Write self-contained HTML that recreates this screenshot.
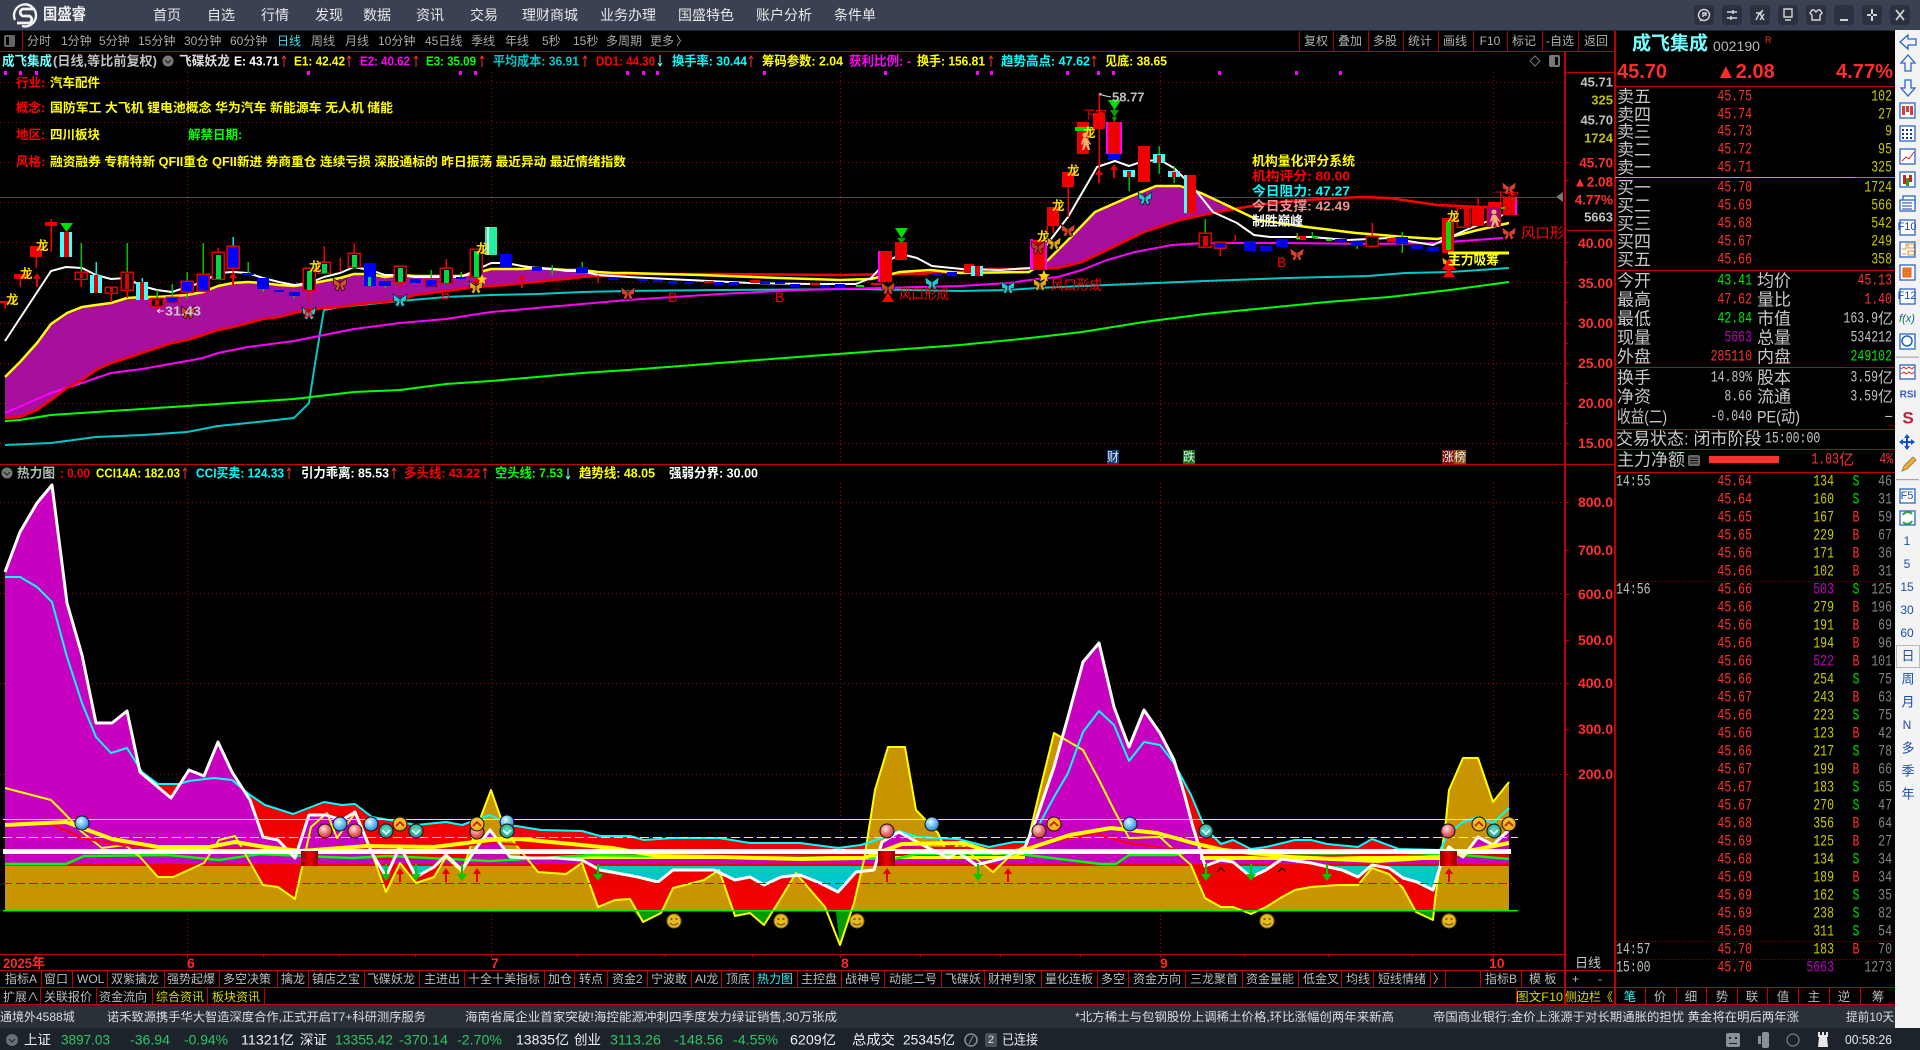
<!DOCTYPE html>
<html lang="zh-CN"><head><meta charset="utf-8"><title>国盛睿</title>
<style>
html,body{margin:0;padding:0;background:#000;width:1920px;height:1050px;overflow:hidden}
svg{display:block}
text{font-family:"Liberation Sans","Noto Sans CJK SC",sans-serif;dominant-baseline:central;white-space:pre}
.b text,text.b{font-weight:700}
.m text,text.m{font-family:"Liberation Mono","Noto Sans CJK SC",monospace;font-size:16px;transform-box:fill-box;transform-origin:0 50%;transform:scaleX(.72)}
.m.e text{transform-origin:100% 50%}
.m.c text{transform-origin:50% 50%}
.e text{text-anchor:end}
.c text{text-anchor:middle}
.l polyline{fill:none}
.cr{shape-rendering:crispEdges}
</style></head><body>
<svg xmlns="http://www.w3.org/2000/svg" width="1920" height="1050" viewBox="0 0 1920 1050">
<defs>
<radialGradient id="gb" cx=".4" cy=".35" r=".7"><stop offset="0" stop-color="#e8f8ff"/><stop offset=".55" stop-color="#62bcf6"/><stop offset="1" stop-color="#2a78d0"/></radialGradient>
<radialGradient id="gr" cx=".4" cy=".35" r=".7"><stop offset="0" stop-color="#ffe4e4"/><stop offset=".55" stop-color="#ec6a6a"/><stop offset="1" stop-color="#c03030"/></radialGradient>
<radialGradient id="gt" cx=".5" cy=".4" r=".7"><stop offset="0" stop-color="#66e0c0"/><stop offset="1" stop-color="#108078"/></radialGradient>
<radialGradient id="go" cx=".5" cy=".4" r=".7"><stop offset="0" stop-color="#ffd848"/><stop offset="1" stop-color="#f09400"/></radialGradient>
<linearGradient id="rb" x1="0" x2="1" y1="0" y2="0"><stop offset="0" stop-color="#8c0000"/><stop offset=".5" stop-color="#f00000"/><stop offset="1" stop-color="#8c0000"/></linearGradient>
<g id="bf"><path d="M0-1-7-6-6 1-3 2-5 5-2 7 0 2 2 7 5 5 3 2 6 1 7-6Z" stroke="#000" stroke-width=".6"/><path d="M0-5V4" stroke="#222" stroke-width="1"/></g>
<g id="up"><path d="M-4 1 0-5 4 1H1V9H-1V1Z" fill="#e80000"/></g>
<g id="dn"><path d="M-1-9H1V1H5L0 8-5 1H-1Z" fill="#00c800"/></g>
<g id="sm"><circle r="7" fill="#e8b820" stroke="#8a6a00"/><circle cx="-2.5" cy="-2" r="1" fill="#553"/><circle cx="2.5" cy="-2" r="1" fill="#553"/><path d="M-4 2Q0 6 4 2" fill="none" stroke="#553"/></g>
<g id="ch"><path d="M-4 2 0-2 4 2" fill="none" stroke-width="2"/></g>
<clipPath id="ca"><rect x="0" y="470" width="1564" height="396"/></clipPath>
<clipPath id="cb"><rect x="0" y="866" width="1564" height="100"/></clipPath>
<clipPath id="cc"><rect x="0" y="470" width="1564" height="440"/></clipPath>
<clipPath id="cd"><rect x="0" y="910" width="1564" height="50"/></clipPath>
</defs>
<rect width="1920" height="1050" fill="#000"/>

<!-- top bar -->
<rect width="1920" height="30" fill="#3a4152"/>
<rect y="30" width="1920" height="1" fill="#20242c"/>
<g fill="none" stroke="#f2f2f2">
<path d="M15 20A11 11 0 1 1 22 26" stroke-width="2.4"/>
<path d="M34 9H23a3.6 3.6 0 0 0 0 7h6a3.6 3.6 0 0 1 0 7H17" stroke-width="2.8"/>
</g>
<text x="43" y="15" font-size="16" font-weight="700" fill="#eee" textLength="43" lengthAdjust="spacingAndGlyphs">国盛睿</text>
<g font-size="14" fill="#e8e8e8">
<text x="153" y="15">首页</text><text x="207" y="15">自选</text><text x="261" y="15">行情</text><text x="315" y="15">发现</text><text x="363" y="15">数据</text><text x="416" y="15">资讯</text><text x="470" y="15">交易</text><text x="522" y="15">理财商城</text><text x="600" y="15">业务办理</text><text x="678" y="15">国盛特色</text><text x="756" y="15">账户分析</text><text x="834" y="15">条件单</text>
</g>
<g fill="#2b3140"><rect x="1694" y="5" width="20" height="20" rx="4"/><rect x="1722" y="5" width="20" height="20" rx="4"/><rect x="1750" y="5" width="20" height="20" rx="4"/><rect x="1778" y="5" width="20" height="20" rx="4"/><rect x="1806" y="5" width="20" height="20" rx="4"/><rect x="1834" y="5" width="20" height="20" rx="4"/><rect x="1862" y="5" width="20" height="20" rx="4"/><rect x="1890" y="5" width="20" height="20" rx="4"/></g>
<g fill="none" stroke="#d4d4d4" stroke-width="1.4">
<circle cx="1704" cy="15" r="5.5"/><path d="M1702 19l-2 2M1702 13h4v2h-3v2"/>
<path d="M1727 12h10M1727 18h10M1733 10v4M1731 16v4"/>
<path d="M1756 20l3-6 4-4M1756 13h6M1760 14l4 6M1764 14l-4 6"/>
<path d="M1784 9h8v8h-8zM1785 20h6"/>
<path d="M1812 10l-2 3 2 2v5h8v-5l2-2-2-3h-2l-2 2-2-2z"/>
<path d="M1840 20h8" stroke-width="2"/>
<path d="M1872 9v5M1872 16v5M1867 15h4M1873 15h4" stroke-width="2"/>
<path d="M1896 10l8 10M1904 10l-8 10" stroke-width="1.8"/>
</g>

<!-- toolbar -->
<rect x="4" y="35" width="11" height="12" rx="2" fill="#666"/><rect x="6" y="37" width="3" height="8" fill="#000"/>
<g font-size="12" fill="#a9a9a9">
<text x="27" y="41">分时</text><text x="61" y="41">1分钟</text><text x="99" y="41">5分钟</text><text x="138" y="41">15分钟</text><text x="184" y="41">30分钟</text><text x="230" y="41">60分钟</text><text x="277" y="41" fill="#3fe0f0">日线</text><text x="311" y="41">周线</text><text x="345" y="41">月线</text><text x="378" y="41">10分钟</text><text x="425" y="41">45日线</text><text x="471" y="41">季线</text><text x="505" y="41">年线</text><text x="542" y="41">5秒</text><text x="573" y="41">15秒</text><text x="606" y="41">多周期</text><text x="650" y="41">更多</text><text x="676" y="41">〉</text>
</g>
<g font-size="12" fill="#b0b0b0" class="c">
<text x="1316" y="41">复权</text><text x="1350" y="41">叠加</text><text x="1385" y="41">多股</text><text x="1420" y="41">统计</text><text x="1455" y="41">画线</text><text x="1490" y="41">F10</text><text x="1524" y="41">标记</text><text x="1560" y="41">-自选</text><text x="1596" y="41">返回</text>
</g>
<path class="cr" stroke="#b00000" fill="none" d="M22.5 31V51M1299.5 31V51M1333.5 31V51M1368.5 31V51M1403.5 31V51M1438.5 31V51M1473.5 31V51M1507.5 31V51M1542.5 31V51M1578.5 31V51"/>

<!-- info header -->
<g class="b" font-size="13">
<text x="2" y="61" fill="#7ff" textLength="50" lengthAdjust="spacingAndGlyphs">成飞集成</text>
<text x="53" y="61" fill="#c0c0c0" textLength="104" lengthAdjust="spacingAndGlyphs">(日线,等比前复权)</text>
<text x="179" y="61" fill="#ddd" textLength="51" lengthAdjust="spacingAndGlyphs">飞碟妖龙</text>
<text x="234" y="61" fill="#fff" textLength="45" lengthAdjust="spacingAndGlyphs">E: 43.71</text>
<text x="294" y="61" fill="#ff0" textLength="51" lengthAdjust="spacingAndGlyphs">E1: 42.42</text>
<text x="360" y="61" fill="#f0f" textLength="50" lengthAdjust="spacingAndGlyphs">E2: 40.62</text>
<text x="426" y="61" fill="#0f0" textLength="50" lengthAdjust="spacingAndGlyphs">E3: 35.09</text>
<text x="493" y="61" fill="#00c8c8" textLength="86" lengthAdjust="spacingAndGlyphs">平均成本: 36.91</text>
<text x="596" y="61" fill="#f00" textLength="59" lengthAdjust="spacingAndGlyphs">DD1: 44.30</text>
<text x="672" y="61" fill="#0ff" textLength="75" lengthAdjust="spacingAndGlyphs">换手率: 30.44</text>
<text x="762" y="61" fill="#ff0" textLength="81" lengthAdjust="spacingAndGlyphs">筹码参数: 2.04</text>
<text x="849" y="61" fill="#f0f" textLength="62" lengthAdjust="spacingAndGlyphs">获利比例: -</text>
<text x="917" y="61" fill="#ff0" textLength="68" lengthAdjust="spacingAndGlyphs">换手: 156.81</text>
<text x="1001" y="61" fill="#0ff" textLength="89" lengthAdjust="spacingAndGlyphs">趋势高点: 47.62</text>
<text x="1105" y="61" fill="#ff0" textLength="62" lengthAdjust="spacingAndGlyphs">见底: 38.65</text>
</g>
<circle cx="168" cy="61" r="5.5" fill="#777"/><path d="M165 60l3 3 3-3" stroke="#222" fill="none"/>
<path stroke="#f03030" fill="none" d="M284 67V56m-2 3 2-3 2 3M349 67V56m-2 3 2-3 2 3M416 67V56m-2 3 2-3 2 3M482 67V56m-2 3 2-3 2 3M585 67V56m-2 3 2-3 2 3M751 67V56m-2 3 2-3 2 3M991 67V56m-2 3 2-3 2 3M1094 67V56m-2 3 2-3 2 3"/>
<path stroke="#7ff" fill="none" d="M660 55V66m-2-3 2 3 2-3"/>
<path stroke="#777" fill="none" d="M1535 56l5 5-5 5-5-5z"/><rect x="1549" y="55" width="11" height="12" rx="2" fill="#777"/><rect x="1555" y="57" width="3" height="8" fill="#000"/>
<path class="cr" fill="#f0f" d="M4 71h3v4H4zM19 71h3v4h-3zM35 71h3v4h-3zM307 71h3v4h-3zM459 71h3v4h-3zM474 71h3v4h-3zM626 71h3v4h-3zM642 71h3v4h-3zM656 71h3v4h-3zM763 71h3v4h-3zM884 71h3v4h-3zM976 71h3v4h-3zM990 71h3v4h-3zM1066 71h3v4h-3zM1097 71h3v4h-3zM1112 71h3v4h-3zM1218 71h3v4h-3zM1295 71h3v4h-3zM1339 71h3v4h-3z"/>

<!-- grid -->
<path class="cr" stroke="#a80000" stroke-dasharray="1 3" fill="none" d="M0 82.5H1564M0 122.5H1564M0 162.5H1564M0 202.5H1564M0 242.5H1564M0 282.5H1564M0 323.5H1564M0 363.5H1564M0 403.5H1564M0 443.5H1564M0 502.5H1564M0 593.5H1564M0 683.5H1564M0 774.5H1564M187.5 72V464M491.5 72V464M840.5 72V464M1160.5 72V464M1493.5 72V464M187.5 483V954M491.5 483V954M840.5 483V954M1160.5 483V954M1493.5 483V954"/>
<path class="cr" stroke="#505050" d="M0 197.5H1556"/><path fill="#777" d="M1556 197l7-5v10z"/>

<!-- top-left fundamentals -->
<g class="b" font-size="12.5">
<text x="16" y="83" fill="#f00">行业:</text><text x="50" y="83" fill="#ff0">汽车配件</text>
<text x="16" y="108" fill="#f00">概念:</text><text x="50" y="108" fill="#ff0" textLength="343" lengthAdjust="spacingAndGlyphs">国防军工 大飞机 锂电池概念 华为汽车 新能源车 无人机 储能</text>
<text x="16" y="135" fill="#f00">地区:</text><text x="50" y="135" fill="#ff0">四川板块</text>
<text x="188" y="135" fill="#0f0">解禁日期:</text>
<text x="16" y="162" fill="#f00">风格:</text><text x="50" y="162" fill="#ff0" textLength="576" lengthAdjust="spacingAndGlyphs">融资融券 专精特新 QFII重仓 QFII新进 券商重仓 连续亏损 深股通标的 昨日振荡 最近异动 最近情绪指数</text>
</g>

<!-- main chart bands -->
<polygon fill="#a6109c" points="5,377 20,362 37,343 51,324 67,313 82,307 96,305 111,303 127,298 142,297 157,297 172,296 187,295 203,292 218,286 233,283 248,282 263,283 279,285 294,286 309,284 324,281 340,278 354,274 370,274 385,277 400,275 415,276 431,276 446,276 461,276 476,273 491,269 506,269 522,269 537,268 552,269 567,270 582,270 598,272 613,273 628,273 628,274 613,276 598,276 582,277 567,279 552,280 537,282 522,283 506,285 491,286 476,287 461,289 446,291 431,293 415,295 400,300 385,302 370,303 354,305 340,307 324,308 309,310 294,313 279,317 263,319 248,323 233,327 218,330 203,335 187,340 172,343 157,348 142,353 127,358 111,363 96,370 82,380 67,388 51,400 37,410 20,417 5,418"/>
<polygon fill="#a6109c" points="1037,270 1048,260 1070,238 1095,212 1129,197 1156,186 1180,186 1201,193 1220,204 1236,208 1217,212 1180,220 1144,232 1107,250 1082,262 1058,268 1037,270"/>
<g class="l" stroke-width="2" stroke-linejoin="round">
<polyline stroke="#00c8c8" points="5,445 51,443 96,437 143,435 187,432 218,426 248,423 294,418 309,403 314,370 320,333 324,310 340,307 370,304 400,301 446,297 491,295 537,294 582,292 628,291 720,290 860,289 960,291 1009,290 1037,288 1107,285 1205,281 1287,278 1368,276 1405,273 1450,272 1509,268"/>
<polyline stroke="#00ff00" points="5,421 20,420 51,415 96,412 142,409 187,406 248,402 294,399 354,392 400,390 446,384 491,381 537,377 582,373 628,370 784,358 960,345 1021,339 1082,332 1144,322 1205,314 1266,308 1327,302 1389,297 1450,290 1509,282"/>
<polyline stroke="#ff00ff" points="5,413 51,393 82,383 111,373 142,369 187,361 203,358 218,353 248,347 294,341 324,335 354,329 400,323 446,319 491,312 537,308 582,304 628,300 720,294 800,290 960,286 1009,283 1037,279 1058,277 1082,270 1107,260 1135,252 1172,245 1205,243 1287,243 1368,244 1437,243 1462,241 1503,238"/>
<polyline stroke="#ff0000" stroke-width="2.500" points="5,418 20,417 37,410 51,400 67,388 82,380 96,370 111,363 127,358 142,353 157,348 172,343 187,340 203,335 218,330 233,327 248,323 263,319 279,317 294,313 309,310 324,308 340,307 354,305 370,303 385,302 400,300 415,295 431,293 446,291 461,289 476,287 491,286 506,285 522,283 537,282 552,280 567,279 582,277 598,276 613,276 628,274 720,274 840,275 900,274 960,272 989,269 1029,269 1058,268 1082,262 1107,250 1144,232 1180,220 1217,212 1246,207 1287,201 1360,197 1389,198 1437,205 1503,208"/>
<polyline stroke="#ffff00" stroke-width="2.500" points="5,377 20,362 37,343 51,324 67,313 82,307 96,305 111,303 127,298 142,297 157,297 172,296 187,295 203,292 218,286 233,283 248,282 263,283 279,285 294,286 309,284 324,281 340,278 354,274 370,274 385,277 400,275 415,276 431,276 446,276 461,276 476,273 491,269 506,269 522,269 537,268 552,269 567,270 582,270 598,272 613,273 628,273 700,275 780,278 840,280 871,279 900,272 930,270 960,273 1029,272 1048,260 1070,238 1095,212 1129,197 1156,186 1180,186 1201,193 1237,210 1258,220 1307,227 1356,233 1405,237 1437,239 1454,236 1478,230 1509,223"/>
<polyline stroke="#ffffff" points="5,341 51,271 66,267 82,268 96,275 111,279 126,278 142,286 157,290 172,292 187,287 203,282 218,273 233,272 248,273 263,278 279,282 294,285 309,283 324,277 340,273 354,267 370,270 385,275 400,275 415,277 431,277 446,277 461,277 476,270 491,263 506,263 522,266 537,268 552,269 567,271 582,271 598,275 613,276 628,277 689,280 750,283 810,284 856,284 871,278 886,262 901,254 917,258 932,266 962,269 1000,270 1030,268 1048,243 1068,217 1082,193 1097,167 1115,161 1129,166 1144,161 1160,160 1174,168 1193,187 1213,212 1237,223 1254,235 1270,237 1311,237 1348,240 1389,238 1433,245 1450,237 1466,230 1503,215"/>
</g>

<!-- wicks -->
<path class="cr" fill="none" stroke="#f00000" stroke-width="1.5" d="M5 303V309M20 279V287M36 257V268M51 219V252M81 279V287M111 293V302M127 290V298M157 306V312M218 248V252M233 268V273M309 290V302M324 246V262M340 258V272M354 243V253M400 282V287M446 259V268M476 277V281M598 275V283M1047 226V233M1053 226V233M1068 187V217M1099 93V177M1114 100V122M1220 248V256M1235 235V241M1372 223V236M1478 197V207M1053 207V233"/>
<path class="cr" fill="none" stroke="#00c000" stroke-width="1.5" d="M81 243V272M127 243V272M157 290V298M172 284V297M187 272V281M187 292V299M203 243V274M248 262V273M263 289V292M294 296V298M370 276V286M385 286V288M431 270V279M461 272V277M552 265V275M582 262V267M1129 177V191M1159 146V154M1159 163V174M1174 166V171M1174 177V183M1205 219V233M1205 247V248M1297 233V236M1312 232V236M1357 246V249M1402 232V237M1402 244V253"/>
<path class="cr" fill="none" stroke="#00f0e0" stroke-width="1.5" d="M233 237V246M96 262V275M142 278V282"/>
<!-- red solid bodies -->
<path class="cr" fill="#ee0000" d="M0 301h10v2H0zM14 274h12v5H14zM30 246h12v11H30zM45 222h12v4H45zM880 251h12v31h-12zM895 242h12v18h-12zM1033 240h14v30h-14zM1047 207h12v19h-12zM1062 172h12v15h-12zM1077 122h12v32h-12zM1093 113h12v16h-12zM1108 122h12v32h-12zM1138 146h12v36h-12zM1184 175h12v38h-12zM1472 207h12v19h-12zM1503 197h12v18h-12zM1442 218h12v35h-12zM1488 202h14v4h-14zM704 281h10v2h-10zM750 280h10v3h-10zM810 283h10v2h-10zM871 283h10v2h-10zM917 272h10v3h-10zM964 264h10v9h-10zM1297 236h9v4h-9zM1387 238h9v4h-9z"/>
<path class="cr" fill="#f0f" d="M1030 239h3v31h-3zM1045 240h2v30h-2zM1120 122h2v32h-2zM1106 122h2v32h-2zM1515 197h2v18h-2zM878 251h2v31h-2z"/>
<path class="cr" fill="#00f" d="M1108 154h12v6h-12z"/>
<!-- green patches -->
<path class="cr" fill="#00e000" d="M1075 127h16v4h-16zM1446 222h5v28h-5zM1490 207h15v2h-15zM1296 237h4v2h-4zM1312 236h6v2h-6zM1326 239h6v2h-6zM856 285h8v2h-8zM1370 238h5v7h-5z"/>
<path class="cr" fill="#00e000" d="M1458 210h5v16h-5z"/>
<!-- hollow red w/ green centers -->
<g class="cr" fill="#000" stroke="#e00000" stroke-width="1.5">
<rect x="212" y="252" width="12" height="27"/><rect x="303" y="268" width="12" height="22"/><rect x="318" y="262" width="12" height="11"/><rect x="348" y="253" width="12" height="14"/><rect x="394" y="266" width="12" height="16"/><rect x="440" y="268" width="12" height="15"/><rect x="470" y="249" width="12" height="28"/>
<rect x="75" y="272" width="12" height="7"/><rect x="105" y="287" width="12" height="6"/><rect x="121" y="272" width="12" height="18"/><rect x="151" y="298" width="12" height="8"/>
<rect x="166" y="297" width="12" height="6" fill="#00f"/><rect x="181" y="281" width="12" height="11" fill="#00f"/><rect x="197" y="274" width="12" height="17" fill="#00f"/><rect x="227" y="246" width="12" height="22" fill="#00f"/><rect x="425" y="279" width="12" height="8" fill="#00f"/><rect x="1214" y="242" width="12" height="6" fill="#00f"/>
<rect x="1366" y="236" width="12" height="10"/><rect x="1199" y="233" width="12" height="14"/>
<rect x="1457" y="208" width="13" height="19" fill="#000"/><rect x="1487" y="206" width="13" height="20" fill="#a0007a"/>
</g>
<path class="cr" fill="#00d840" d="M216 255h5v24h-5zM307 271h5v19h-5zM322 264h5v9h-5zM352 255h5v12h-5zM398 268h5v14h-5zM444 270h5v13h-5zM474 251h5v26h-5z"/>
<path class="cr" fill="#e00000" d="M80 274h3v4h-3zM110 288h3v4h-3zM125 274h4v15h-4zM155 300h4v5h-4zM1203 236h5v10h-5zM1464 208h5v18h-5z"/>
<!-- cyan/red candles -->
<path class="cr" fill="#4ff" d="M60 232h12v25H60zM90 275h12v18H90zM136 282h12v18h-12zM1184 175h3v38h-3zM971 266h12v10h-12zM1123 170h12v7h-12zM1153 154h12v9h-12zM1168 171h12v6h-12z"/>
<path class="cr" fill="#e00000" d="M64 232h5v25h-5zM94 275h4v18h-4zM140 282h4v18h-4zM975 266h5v10h-5zM1127 171h4v6h-4zM1157 155h4v8h-4zM1172 172h4v5h-4z"/>
<path class="cr" fill="#20f0a0" d="M485 227h12v28h-12z"/><path class="cr" fill="#e8fff0" d="M487 227h2v28h-2z"/>
<!-- blue solid -->
<path class="cr" fill="#0000f0" d="M242 273h12v2h-12zM257 278h12v11h-12zM274 290h10v2h-10zM289 292h11v4h-11zM364 263h12v23h-12zM379 281h12v5h-12zM410 279h11v4h-11zM456 277h10v2h-10zM500 254h12v13h-12zM532 267h10v4h-10zM576 267h12v6h-12zM608 278h10v2h-10zM638 279h10v2h-10zM653 280h10v2h-10zM668 281h10v3h-10zM684 282h10v2h-10zM714 282h10v3h-10zM729 282h10v3h-10zM760 281h10v3h-10zM775 282h10v2h-10zM790 284h10v3h-10zM820 285h10v3h-10zM835 284h10v4h-10zM932 273h10v3h-10zM947 272h10v4h-10zM1244 241h12v10h-12zM1260 246h12v5h-12zM1276 239h12v8h-12zM1335 239h12v3h-12zM1351 241h12v5h-12zM1396 237h12v7h-12zM1411 245h12v4h-12zM1427 247h12v4h-12z"/>
<path class="cr" fill="#00d840" d="M368 277h3v9h-3z"/>
<!-- chart annotations -->
<path fill="#00e000" d="M60 223h13l-6.500 9zM1108 100h13l-6.500 10z"/><path fill="#00a000" d="M1110 110h9l-4.500 7zM1112 117h5l-2.500 5z"/>
<path fill="#00e000" d="M895 228h13l-6.500 10z"/><path fill="#00a000" d="M897 238h9l-4.500 6z"/>
<use href="#up" x="37" y="278" /><use href="#up" x="233" y="277"/><use href="#up" x="477" y="282"/><use href="#up" x="522" y="279"/><use href="#up" x="1099" y="174"/><use href="#up" x="1114" y="169"/>
<g fill="#ffe000" font-size="12.500" font-weight="700"><text x="6" y="300">龙</text><text x="20" y="274">龙</text><text x="36" y="246">龙</text><text x="309" y="267">龙</text><text x="476" y="249">龙</text><text x="1067" y="171">龙</text><text x="1052" y="206">龙</text><text x="1037" y="237">龙</text><text x="1083" y="133">龙</text><text x="1447" y="217">龙</text></g>
<use href="#bf" x="340" y="284" fill="#d8502a"/><use href="#bf" x="400" y="300" fill="#22c8d0"/><use href="#bf" x="476" y="287" fill="#e0a818"/><use href="#bf" x="628" y="293" fill="#d8402a"/><use href="#bf" x="309" y="313" fill="#22c8d0"/><use href="#bf" x="188" y="312" fill="#d8402a"/>
<use href="#bf" x="1068" y="230" fill="#d8402a"/><use href="#bf" x="1054" y="243" fill="#e0a818"/><use href="#bf" x="1038" y="247" fill="#c83030"/><use href="#bf" x="1040" y="284" fill="#e0a818"/><use href="#bf" x="1008" y="287" fill="#22c8d0"/><use href="#bf" x="1145" y="198" fill="#22c8d0"/><use href="#bf" x="1297" y="254" fill="#d8402a"/><use href="#bf" x="1509" y="188" fill="#d8402a"/><use href="#bf" x="1509" y="233" fill="#d8402a"/><use href="#bf" x="1449" y="263" fill="#e0a818"/><use href="#bf" x="932" y="283" fill="#22c8d0"/><use href="#bf" x="888" y="288" fill="#d8402a"/>
<path fill="#f00" d="M888 292l-6 10h12zM1449 258l-7 12h14zM1449 268l-6 9h12z"/>
<path fill="#ffd000" d="M1044 270l1.800 4 4.200.400-3.200 2.800 1 4.200-3.800-2.200-3.800 2.200 1-4.200-3.200-2.800 4.200-.400zM482 274l1.600 3.500 3.600.4-2.800 2.400.9 3.700-3.300-1.900-3.300 1.900.9-3.700-2.800-2.400 3.600-.4z"/>
<g fill="#f00" font-size="14"><text x="441" y="294">B</text><text x="304" y="312">B</text><text x="668" y="297">B</text><text x="775" y="297">B</text><text x="1277" y="262">B</text><text x="899" y="294" textLength="50" lengthAdjust="spacingAndGlyphs">风口形成</text><text x="1051" y="285" textLength="51" lengthAdjust="spacingAndGlyphs">风口形成</text><text x="1521" y="233" textLength="43" lengthAdjust="spacingAndGlyphs">风口形</text><text x="1083" y="115" font-size="12">下家</text><text x="1495" y="197" font-size="12">下家</text></g>
<path stroke="#ffff00" stroke-width="3" d="M1448 253H1509"/>
<text x="1448" y="260" font-size="13" font-weight="700" fill="#ffff30" textLength="51" lengthAdjust="spacingAndGlyphs">主力吸筹</text>
<g fill="#f0b070" stroke="none"><circle cx="1085" cy="135" r="2.500"/><path d="M1083 138h4l4 6-1 1-2-3 2 8h-2l-2-5-2 5h-2l2-8-2 3-1-1z"/><circle cx="1494" cy="212" r="2.500"/><path d="M1492 215h4l4 6-1 1-2-3 2 8h-2l-2-5-2 5h-2l2-8-2 3-1-1z"/></g>
<text x="1112" y="97" class="b" font-size="13" fill="#c0c0c0">58.77</text><path stroke="#ddd" fill="none" d="M1100 93l2 2 4 1 5 1M1100 93v3"/>
<text x="165" y="311" class="b" font-size="13" fill="#c8c8c8" textLength="36" lengthAdjust="spacingAndGlyphs">31.43</text><path stroke="#ddd" fill="none" d="M157 311h7M157 311l3-2M157 311l3 2"/>
<g class="b" font-size="13">
<text x="1252" y="161" fill="#ff0" textLength="103" lengthAdjust="spacingAndGlyphs">机构量化评分系统</text>
<text x="1252" y="176" fill="#f00" textLength="98" lengthAdjust="spacingAndGlyphs">机构评分: 80.00</text>
<text x="1252" y="191" fill="#0ff" textLength="98" lengthAdjust="spacingAndGlyphs">今日阻力: 47.27</text>
<text x="1252" y="206" fill="#f09090" textLength="98" lengthAdjust="spacingAndGlyphs">今日支撑: 42.49</text>
<text x="1252" y="221" fill="#fff" textLength="51" lengthAdjust="spacingAndGlyphs">制胜巅峰</text>
</g>
<path class="cr" fill="#0a3a7a" d="M1107 450h12v14h-12z"/><path class="cr" fill="#0a7a20" d="M1183 450h12v14h-12z"/><path class="cr" fill="#801010" d="M1442 450h12v14h-12z"/><path class="cr" fill="#8a5010" d="M1454 450h12v14h-12z"/>
<g font-size="12" fill="#e8e8e8"><text x="1107" y="457">财</text><text x="1183" y="457">跌</text><text x="1442" y="457">涨榜</text></g>

<!-- axis main -->
<g class="e b">
<text x="1613" y="82" font-size="13" fill="#c0c0c0">45.71</text><text x="1613" y="100" font-size="13" fill="#c0c000">325</text><text x="1613" y="120" font-size="13" fill="#c0c0c0">45.70</text><text x="1613" y="138" font-size="13" fill="#c0c000">1724</text>
<g fill="#ff3030" font-size="13.500"><text x="1613" y="163">45.70</text><text x="1613" y="182">▲2.08</text><text x="1613" y="200">4.77%</text></g>
<text x="1613" y="217" font-size="13" fill="#c0c0c0">5663</text>
<g fill="#ff3030" font-size="14"><text x="1613" y="243">40.00</text><text x="1613" y="283">35.00</text><text x="1613" y="323">30.00</text><text x="1613" y="363">25.00</text><text x="1613" y="403">20.00</text><text x="1613" y="443">15.00</text>
<text x="1613" y="502">800.0</text><text x="1613" y="550">700.0</text><text x="1613" y="594">600.0</text><text x="1613" y="640">500.0</text><text x="1613" y="683">400.0</text><text x="1613" y="729">300.0</text><text x="1613" y="774">200.0</text></g>
</g>
<path class="cr" stroke="#c00000" d="M1564 162.500h5M1564 180.500h5M1564 242.500h5M1564 262.500h4M1564 282.500h5M1564 302.500h4M1564 323.500h5M1564 343.500h4M1564 363.500h5M1564 383.500h4M1564 403.500h5M1564 423.500h4M1564 443.500h5M1564 502.500h5M1564 550.500h5M1564 594.500h5M1564 640.500h5M1564 683.500h5M1564 729.500h5M1564 774.500h5"/>

<!-- sub header -->
<circle cx="7" cy="473" r="5.500" fill="#777"/><path d="M4 472l3 3 3-3" stroke="#222" fill="none"/>
<g class="b" font-size="13">
<text x="17" y="473" fill="#b8b8b8" font-weight="400" textLength="38" lengthAdjust="spacingAndGlyphs">热力图</text>
<text x="60" y="473" fill="#f00" textLength="30" lengthAdjust="spacingAndGlyphs">: 0.00</text>
<text x="96" y="473" fill="#ff0" textLength="84" lengthAdjust="spacingAndGlyphs">CCI14A: 182.03</text>
<text x="196" y="473" fill="#0ff" textLength="88" lengthAdjust="spacingAndGlyphs">CCI买卖: 124.33</text>
<text x="301" y="473" fill="#fff" textLength="88" lengthAdjust="spacingAndGlyphs">引力乖离: 85.53</text>
<text x="404" y="473" fill="#f00" textLength="76" lengthAdjust="spacingAndGlyphs">多头线: 43.22</text>
<text x="495" y="473" fill="#0f0" textLength="68" lengthAdjust="spacingAndGlyphs">空头线: 7.53</text>
<text x="579" y="473" fill="#ff0" textLength="76" lengthAdjust="spacingAndGlyphs">趋势线: 48.05</text>
<text x="669" y="473" fill="#fff" textLength="89" lengthAdjust="spacingAndGlyphs">强弱分界: 30.00</text>
</g>
<path stroke="#f03030" fill="none" d="M185 479V468m-2 3 2-3 2 3M289 479V468m-2 3 2-3 2 3M394 479V468m-2 3 2-3 2 3M485 479V468m-2 3 2-3 2 3"/>
<path stroke="#7ff" fill="none" d="M568 468V479m-2-3 2 3 2-3"/>

<!-- sub chart areas -->
<polygon fill="#f00000" points="5,577 20,577 37,587 52,602 67,657 82,703 96,737 111,753 127,748 142,772 158,784 179,784 189,781 214,778 232,780 250,795 265,805 293,814 324,802 342,805 355,804 372,817 400,822 416,825 446,822 462,825 490,815 510,825 541,830 582,831 600,836 630,836 644,840 673,838 719,838 750,843 800,843 838,848 861,845 882,838 899,831 917,837 958,839 989,847 1014,842 1025,842 1040,823 1054,797 1068,773 1083,732 1099,711 1114,725 1129,761 1144,742 1160,745 1174,763 1191,795 1205,828 1221,844 1233,840 1251,849 1266,847 1295,840 1311,840 1327,844 1358,847 1372,839 1399,849 1440,850 1449,833 1463,822 1478,817 1493,823 1509,808 1509,866 5,866"/>
<rect x="5" y="866" width="1504" height="44" fill="#f00000"/>
<polygon clip-path="url(#cb)" fill="#00c8c8" points="5,572 20,532 37,503 52,485 67,603 82,655 96,723 112,723 127,711 140,772 171,798 189,770 204,776 218,742 232,772 250,800 263,837 278,840 295,858 309,815 326,815 342,820 355,812 372,853 386,877 400,846 416,877 434,867 446,855 462,870 477,847 490,830 510,857 531,858 556,858 582,860 600,870 638,877 658,882 673,870 714,870 735,880 750,877 764,885 781,877 800,875 820,883 838,892 856,872 874,870 882,842 899,832 917,842 948,858 958,852 976,865 1004,858 1025,847 1037,817 1054,767 1068,717 1083,662 1099,643 1114,707 1129,747 1144,710 1160,733 1174,760 1184,793 1193,827 1205,866 1221,860 1233,862 1251,877 1266,870 1282,859 1311,863 1342,870 1358,877 1372,865 1389,868 1403,878 1417,882 1433,890 1442,860 1449,847 1463,857 1478,837 1493,845 1509,830 1509,866 5,866"/>
<polygon clip-path="url(#cc)" fill="#c89400" points="5,788 51,800 64,813 82,832 102,848 125,845 140,857 158,877 173,877 204,863 219,840 235,836 263,885 278,887 295,899 311,827 327,813 337,838 355,813 370,848 386,892 400,863 416,883 434,877 446,857 462,872 477,827 491,790 505,830 520,850 538,872 566,874 582,863 598,907 615,900 630,899 643,922 661,913 673,888 704,880 719,870 735,916 750,913 764,925 781,898 796,873 800,878 825,907 840,945 854,903 864,860 875,790 888,747 905,747 916,810 938,833 948,855 960,842 974,857 993,872 1008,858 1025,853 1040,790 1054,733 1083,750 1099,780 1114,810 1129,838 1160,837 1174,850 1191,865 1205,898 1221,907 1233,907 1251,914 1266,907 1282,897 1295,890 1311,887 1338,885 1358,885 1372,868 1389,874 1403,888 1416,912 1433,920 1435,900 1446,820 1449,790 1463,758 1478,758 1493,802 1509,782 1509,910 5,910"/>
<polygon clip-path="url(#cd)" fill="#009c00" points="628,905 643,922 661,913 668,905"/>
<polygon clip-path="url(#cd)" fill="#009c00" points="730,905 735,916 750,913 764,925 781,898 785,905"/>
<polygon clip-path="url(#cd)" fill="#009c00" points="835,905 840,945 854,903"/>
<polygon clip-path="url(#cd)" fill="#009c00" points="1240,905 1251,914 1266,905"/>
<polygon clip-path="url(#cd)" fill="#009c00" points="1410,905 1416,912 1433,920 1436,905"/>
<polygon clip-path="url(#ca)" fill="#c800c0" points="5,572 20,532 37,503 52,485 67,603 82,655 96,723 112,723 127,711 140,772 171,798 189,770 204,776 218,742 232,772 250,800 263,837 278,840 295,858 309,815 326,815 342,820 355,812 372,853 386,877 400,846 416,877 434,867 446,855 462,870 477,847 490,830 510,857 531,858 556,858 582,860 600,870 638,877 658,882 673,870 714,870 735,880 750,877 764,885 781,877 800,875 820,883 838,892 856,872 874,870 882,842 899,832 917,842 948,858 958,852 976,865 1004,858 1025,847 1037,817 1054,767 1068,717 1083,662 1099,643 1114,707 1129,747 1144,710 1160,733 1174,760 1184,793 1193,827 1205,866 1221,860 1233,862 1251,877 1266,870 1282,859 1311,863 1342,870 1358,877 1372,865 1389,868 1403,878 1417,882 1433,890 1442,860 1449,847 1463,857 1478,837 1493,845 1509,830 1509,866 5,866"/>
<!-- stripes -->
<path class="cr" fill="#e00000" d="M520 853h505v5H520zM1200 853h309v4h-309z"/>
<path class="cr" fill="#ffff00" d="M560 856h465v3H560zM1200 856h250v5h-250z"/>
<path class="cr" fill="#c800c0" d="M5 860h1504v4H5z"/>
<path class="cr" fill="#f00000" d="M5 864h1504v2H5z"/>
<!-- lines in sub -->
<g class="l" stroke-linejoin="round">
<polyline stroke="#00ff00" stroke-width="2.500" points="5,864 66,864 84,856 168,855 219,860 260,854 327,857 352,858 388,856 490,861 592,855 714,857 800,857 894,859 917,854 1019,854 1101,864 1116,864 1129,855 1175,855 1188,852 1463,855 1509,859"/>
<polyline stroke="#ffff00" stroke-width="2" points="5,788 51,800 64,813 82,832 102,848 125,845 140,857 158,877 173,877 204,863 219,840 235,836 263,885 278,887 295,899 311,827 327,813 337,838 355,813 370,848 386,892 400,863 416,883 434,877 446,857 462,872 477,827 491,790 505,830 520,850 538,872 566,874 582,863 598,907 615,900 630,899 643,922 661,913 673,888 704,880 719,870 735,916 750,913 764,925 781,898 796,873 800,878 825,907 840,945 854,903 864,860 875,790 888,747 905,747 916,810 938,833 948,855 960,842 974,857 993,872 1008,858 1025,853 1040,790 1054,733 1083,750 1099,780 1114,810 1129,838 1160,837 1174,850 1191,865 1205,898 1221,907 1233,907 1251,914 1266,907 1282,897 1295,890 1311,887 1338,885 1358,885 1372,868 1389,874 1403,888 1416,912 1433,920 1435,900 1446,820 1449,790 1463,758 1478,758 1493,802 1509,782"/>
<polyline stroke="#ff0000" stroke-width="2" points="54,825 82,838 122,845 170,850 240,848 300,851 367,848 434,849 490,843 561,847 640,853 760,857 860,858 902,848 963,848 1024,847 1096,833 1127,843 1198,852 1290,857 1509,851"/>
<polyline stroke="#00ffff" stroke-width="2" points="5,577 20,577 37,587 52,602 67,657 82,703 96,737 111,753 127,748 142,772 158,784 179,784 189,781 214,778 232,780 250,795 265,805 293,814 324,802 342,805 355,804 372,817 400,822 416,825 446,822 462,825 490,815 510,825 541,830 582,831 600,836 630,836 644,840 673,838 719,838 750,843 800,843 838,848 861,845 882,838 899,831 917,837 958,839 989,847 1014,842 1025,842 1040,823 1054,797 1068,773 1083,732 1099,711 1114,725 1129,761 1144,742 1160,745 1174,763 1191,795 1205,828 1221,844 1233,840 1251,849 1266,847 1295,840 1311,840 1327,844 1358,847 1372,839 1399,849 1440,850 1449,833 1463,822 1478,817 1493,823 1509,808"/>
<polyline stroke="#ffffff" stroke-width="3" points="5,572 20,532 37,503 52,485 67,603 82,655 96,723 112,723 127,711 140,772 171,798 189,770 204,776 218,742 232,772 250,800 263,837 278,840 295,858 309,815 326,815 342,820 355,812 372,853 386,877 400,846 416,877 434,867 446,855 462,870 477,847 490,830 510,857 531,858 556,858 582,860 600,870 638,877 658,882 673,870 714,870 735,880 750,877 764,885 781,877 800,875 820,883 838,892 856,872 874,870 882,842 899,832 917,842 948,858 958,852 976,865 1004,858 1025,847 1037,817 1054,767 1068,717 1083,662 1099,643 1114,707 1129,747 1144,710 1160,733 1174,760 1184,793 1193,827 1205,866 1221,860 1233,862 1251,877 1266,870 1282,859 1311,863 1342,870 1358,877 1372,865 1389,868 1403,878 1417,882 1433,890 1442,860 1449,847 1463,857 1478,837 1493,845 1509,830"/>
<polyline stroke="#ffff00" stroke-width="4" points="5,825 66,822 112,839 158,847 209,847 235,842 265,847 301,851 367,846 434,847 490,840 520,839 561,843 612,848 658,856 719,857 800,859 864,858 902,844 963,843 994,853 1024,850 1070,835 1111,828 1157,833 1193,843 1223,850 1290,857 1377,861 1438,857 1509,843"/>
</g>
<path class="cr" stroke="#ffff00" d="M3 819.500H1518"/><path class="cr" stroke="#ffff00" stroke-dasharray="9 4" d="M3 837.500H1518"/>
<rect x="3" y="849" width="1508" height="5" fill="#fff"/>
<path class="cr" stroke="#e00000" stroke-dasharray="9 4" d="M3 883.500H1512"/>
<path class="cr" stroke="#00ee00" stroke-width="1.500" d="M3 910.500H1518"/>
<g fill="url(#rb)"><rect x="301" y="851" width="17" height="15"/><rect x="878" y="851" width="17" height="15"/><rect x="1440" y="851" width="17" height="15"/></g>
<use href="#up" x="400" y="873"/><use href="#up" x="446" y="873"/><use href="#up" x="477" y="873"/><use href="#up" x="887" y="873"/><use href="#up" x="1008" y="873"/><use href="#up" x="1449" y="873"/>
<use href="#dn" x="386" y="873"/><use href="#dn" x="416" y="873"/><use href="#dn" x="462" y="873"/><use href="#dn" x="598" y="873"/><use href="#dn" x="978" y="873"/><use href="#dn" x="1206" y="873"/><use href="#dn" x="1251" y="873"/><use href="#dn" x="1327" y="873"/>
<path stroke="#000" fill="none" d="M1217 872l4-4 4 4M1278 872l4-4 4 4"/>
<g stroke="#111" stroke-width="1">
<g fill="url(#gb)"><circle cx="82" cy="823" r="7"/><circle cx="340" cy="824" r="7"/><circle cx="371" cy="824" r="7"/><circle cx="507" cy="822" r="7"/><circle cx="932" cy="824" r="7"/><circle cx="1130" cy="824" r="7"/></g>
<g fill="url(#gr)"><circle cx="325" cy="831" r="7"/><circle cx="355" cy="831" r="7"/><circle cx="477" cy="832" r="7"/><circle cx="887" cy="831" r="7"/><circle cx="1039" cy="831" r="7"/><circle cx="1448" cy="831" r="7"/></g>
<g fill="url(#gt)"><circle cx="386" cy="831" r="7"/><circle cx="416" cy="831" r="7"/><circle cx="507" cy="831" r="7"/><circle cx="1206" cy="831" r="7"/><circle cx="1494" cy="831" r="7"/></g>
<g fill="url(#go)"><circle cx="400" cy="824" r="7"/><circle cx="477" cy="824" r="7"/><circle cx="1054" cy="824" r="7"/><circle cx="1479" cy="824" r="7"/><circle cx="1509" cy="824" r="7"/></g>
</g>
<g stroke="#c03000"><use href="#ch" x="400" y="824"/><use href="#ch" x="477" y="824"/><use href="#ch" x="1054" y="824"/><use href="#ch" x="1479" y="824"/><use href="#ch" x="1509" y="824"/></g>
<g stroke="#c8fff0"><use href="#ch" x="386" y="830" transform="rotate(180 386 831)"/><use href="#ch" x="416" y="830" transform="rotate(180 416 831)"/><use href="#ch" x="507" y="830" transform="rotate(180 507 831)"/><use href="#ch" x="1206" y="830" transform="rotate(180 1206 831)"/><use href="#ch" x="1494" y="830" transform="rotate(180 1494 831)"/></g>
<use href="#sm" x="674" y="921"/><use href="#sm" x="781" y="921"/><use href="#sm" x="857" y="921"/><use href="#sm" x="1267" y="921"/><use href="#sm" x="1449" y="921"/>

<!-- frame lines -->
<g class="cr" stroke="#c00000" fill="none">
<path d="M0 51.500H1615M0 464.500H1615M0 954.500H1565M0 970.500H1615M0 987.500H1895M0 1004.500H1895M1564 72.500H1615M1564 230.500H1615M1615 86.500H1895M1615 270.500H1895M1615 367.500H1895M1615 429.500H1895M1615 449.500H1895M1615 472.500H1895"/>
<path stroke-width="2" d="M1565 51V1005M1615 31V1005"/>
<path d="M187.500 954v4M263.500 954v3M339.500 954v3M415.500 954v3M491.500 954v4M577.500 954v3M665.500 954v3M752.500 954v3M840.500 954v4M920.500 954v3M1000.500 954v3M1080.500 954v3M1160.500 954v4M1244.500 954v3M1328.500 954v3M1412.500 954v3M1493.500 954v4"/>
<path d="M41.500 970v17M72.500 970v17M107.500 970v17M164.500 970v17M219.500 970v17M277.500 970v17M308.500 970v17M364.500 970v17M419.500 970v17M464.500 970v17M544.500 970v17M574.500 970v17M607.500 970v17M647.500 970v17M691.500 970v17M721.500 970v17M753.500 970v17M797.500 970v17M841.500 970v17M884.500 970v17M941.500 970v17M984.500 970v17M1041.500 970v17M1097.500 970v17M1128.500 970v17M1185.500 970v17M1242.500 970v17M1298.500 970v17M1341.500 970v17M1373.500 970v17M1430.500 970v17M1445.500 970v17M1480.500 970v17M1521.500 970v17"/>
<path d="M40.500 987v18M96.500 987v18M152.500 987v18M207.500 987v18M264.500 987v18M1516.500 987v18M1564.500 987v18M1645.500 987v18M1676.500 987v18M1706.500 987v18M1737.500 987v18M1767.500 987v18M1798.500 987v18M1829.500 987v18M1860.500 987v18"/>
</g>

<!-- date row -->
<g class="b" font-size="14" fill="#ff2828"><text x="3" y="963" textLength="42" lengthAdjust="spacingAndGlyphs">2025年</text><text x="187" y="963">6</text><text x="491" y="963">7</text><text x="841" y="963">8</text><text x="1160" y="963">9</text><text x="1489" y="963">10</text></g>
<text x="1575" y="963" font-size="13" fill="#c8c8c8">日线</text>
<g font-size="12" fill="#bcbcbc">
<text x="5" y="979">指标A</text><text x="44" y="979">窗口</text><text x="77" y="979">WOL</text><text x="111" y="979">双紫擒龙</text><text x="167" y="979">强势起爆</text><text x="223" y="979">多空决策</text><text x="281" y="979">擒龙</text><text x="312" y="979">镇店之宝</text><text x="367" y="979">飞碟妖龙</text><text x="424" y="979">主进出</text><text x="468" y="979">十全十美指标</text><text x="548" y="979">加仓</text><text x="579" y="979">转点</text><text x="612" y="979">资金2</text><text x="651" y="979">宁波敢</text><text x="695" y="979">AI龙</text><text x="726" y="979">顶底</text><text x="757" y="979" fill="#30f0f0">热力图</text><text x="801" y="979">主控盘</text><text x="845" y="979">战神号</text><text x="889" y="979">动能二号</text><text x="945" y="979">飞碟妖</text><text x="988" y="979">财神到家</text><text x="1045" y="979">量化连板</text><text x="1101" y="979">多空</text><text x="1133" y="979">资金方向</text><text x="1190" y="979">三龙聚首</text><text x="1246" y="979">资金量能</text><text x="1303" y="979">低金叉</text><text x="1346" y="979">均线</text><text x="1378" y="979">短线情绪</text><text x="1433" y="979">〉</text><text x="1485" y="979">指标B</text><text x="1529" y="979">模 板</text><text x="1572" y="979">+</text><text x="1598" y="979">-</text>
<text x="3" y="997">扩展∧</text><text x="44" y="997">关联报价</text><text x="99" y="997">资金流向</text><text x="156" y="997" fill="#d8d800">综合资讯</text><text x="212" y="997" fill="#d8d800">板块资讯</text>
<text x="1516" y="997" fill="#d8d800" textLength="47" lengthAdjust="spacingAndGlyphs">图文F10</text><text x="1565" y="997" fill="#d8d800" textLength="48" lengthAdjust="spacingAndGlyphs">侧边栏《</text>
</g>
<g font-size="12.500" fill="#b8b8b8" class="c"><text x="1630" y="997" fill="#30f0f0">笔</text><text x="1660" y="997">价</text><text x="1691" y="997">细</text><text x="1722" y="997">势</text><text x="1752" y="997">联</text><text x="1783" y="997">值</text><text x="1814" y="997">主</text><text x="1844" y="997">逆</text><text x="1878" y="997">筹</text></g>

<!-- right panel header -->
<text x="1632" y="44" font-size="19" font-weight="700" fill="#7ff" textLength="76" lengthAdjust="spacingAndGlyphs">成飞集成</text>
<text x="1713" y="46" font-size="14" fill="#b8b8b8" textLength="47" lengthAdjust="spacingAndGlyphs">002190</text>
<text x="1765" y="40" font-size="9" fill="#f33">R</text>
<g class="b" font-size="20" fill="#ff2c2c"><text x="1617" y="72">45.70</text><text x="1716" y="72">▲2.08</text><text x="1836" y="72" textLength="57" lengthAdjust="spacingAndGlyphs">4.77%</text></g>
<g font-size="17" fill="#c8c8c8">
<text x="1617" y="97">卖五</text><text x="1617" y="115">卖四</text><text x="1617" y="132">卖三</text><text x="1617" y="150">卖二</text><text x="1617" y="168">卖一</text>
<text x="1617" y="188">买一</text><text x="1617" y="206">买二</text><text x="1617" y="224">买三</text><text x="1617" y="242">买四</text><text x="1617" y="260">买五</text>
<text x="1617" y="281">今开</text><text x="1617" y="300">最高</text><text x="1617" y="319">最低</text><text x="1617" y="338">现量</text><text x="1617" y="357">外盘</text>
<text x="1757" y="281">均价</text><text x="1757" y="300">量比</text><text x="1757" y="319">市值</text><text x="1757" y="338">总量</text><text x="1757" y="357">内盘</text>
<text x="1617" y="378">换手</text><text x="1617" y="397">净资</text><text x="1617" y="417" textLength="50" lengthAdjust="spacingAndGlyphs">收益(二)</text>
<text x="1757" y="378">股本</text><text x="1757" y="397">流通</text><text x="1757" y="417" textLength="43" lengthAdjust="spacingAndGlyphs">PE(动)</text>
<text x="1616" y="439">交易状态: 闭市阶段</text><text x="1617" y="460">主力净额</text>
</g>
<g class="m" fill="#c8c8c8"><text x="1765" y="439">15:00:00</text></g>
<path class="cr" fill="#d8a020" d="M1615 177h240v1h-240z"/><path class="cr" fill="#4a90d0" d="M1855 177h40v1h-40z"/>
<rect x="1688" y="455" width="12" height="11" rx="2" fill="#666"/><path d="M1690 458h8M1690 460.500h8M1690 463h8" stroke="#111"/>
<rect x="1709" y="456" width="70" height="7" fill="#ff3030"/>
<g class="m e" fill="#ff3030">
<text x="1752" y="97">45.75</text><text x="1752" y="115">45.74</text><text x="1752" y="132">45.73</text><text x="1752" y="150">45.72</text><text x="1752" y="168">45.71</text>
<text x="1752" y="188">45.70</text><text x="1752" y="206">45.69</text><text x="1752" y="224">45.68</text><text x="1752" y="242">45.67</text><text x="1752" y="260">45.66</text>
<text x="1752" y="300">47.62</text><text x="1752" y="357">285110</text><text x="1892" y="281">45.13</text><text x="1892" y="300">1.40</text>
<text x="1839" y="460">1.03</text><text x="1893" y="460">4%</text>
</g>
<text x="1839" y="460" font-size="15" fill="#ff3030">亿</text>
<g class="m e" fill="#c8c800">
<text x="1892" y="97">102</text><text x="1892" y="115">27</text><text x="1892" y="132">9</text><text x="1892" y="150">95</text><text x="1892" y="168">325</text>
<text x="1892" y="188">1724</text><text x="1892" y="206">566</text><text x="1892" y="224">542</text><text x="1892" y="242">249</text><text x="1892" y="260">358</text>
</g>
<g class="m e" fill="#00e800"><text x="1752" y="281">43.41</text><text x="1752" y="319">42.84</text><text x="1892" y="357">249102</text></g>
<g class="m e" fill="#c000c0"><text x="1752" y="338">5663</text></g>
<g class="m e" fill="#c0c0c0"><text x="1878" y="319">163.9</text><text x="1892" y="338">534212</text><text x="1752" y="378">14.89%</text><text x="1752" y="397">8.66</text><text x="1752" y="417">-0.040</text><text x="1878" y="378">3.59</text><text x="1878" y="397">3.59</text><text x="1892" y="417">—</text></g>
<g font-size="15" fill="#c0c0c0"><text x="1878" y="319">亿</text><text x="1878" y="378">亿</text><text x="1878" y="397">亿</text></g>

<!-- ticks -->
<path class="cr" stroke="#a00000" stroke-dasharray="1 2" d="M1616 581.500H1895M1616 941.500H1895M1616 959.500H1895"/>
<g class="m" fill="#c0c0c0"><text x="1616" y="482">14:55</text><text x="1616" y="590">14:56</text><text x="1616" y="950">14:57</text><text x="1616" y="968">15:00</text></g>
<g class="m e" fill="#ff3030"><text x="1752" y="482">45.64</text><text x="1752" y="500">45.64</text><text x="1752" y="518">45.65</text><text x="1752" y="536">45.65</text><text x="1752" y="554">45.66</text><text x="1752" y="572">45.66</text><text x="1752" y="590">45.66</text><text x="1752" y="608">45.66</text><text x="1752" y="626">45.66</text><text x="1752" y="644">45.66</text><text x="1752" y="662">45.66</text><text x="1752" y="680">45.66</text><text x="1752" y="698">45.67</text><text x="1752" y="716">45.66</text><text x="1752" y="734">45.66</text><text x="1752" y="752">45.66</text><text x="1752" y="770">45.67</text><text x="1752" y="788">45.67</text><text x="1752" y="806">45.67</text><text x="1752" y="824">45.68</text><text x="1752" y="842">45.69</text><text x="1752" y="860">45.68</text><text x="1752" y="878">45.69</text><text x="1752" y="896">45.69</text><text x="1752" y="914">45.69</text><text x="1752" y="932">45.69</text><text x="1752" y="950">45.70</text><text x="1752" y="968">45.70</text></g>
<g class="m e" fill="#c8c800"><text x="1834" y="482">134</text><text x="1834" y="500">160</text><text x="1834" y="518">167</text><text x="1834" y="536">229</text><text x="1834" y="554">171</text><text x="1834" y="572">102</text><text x="1834" y="590" fill="#c000c0">503</text><text x="1834" y="608">279</text><text x="1834" y="626">191</text><text x="1834" y="644">194</text><text x="1834" y="662" fill="#c000c0">522</text><text x="1834" y="680">254</text><text x="1834" y="698">243</text><text x="1834" y="716">223</text><text x="1834" y="734">123</text><text x="1834" y="752">217</text><text x="1834" y="770">199</text><text x="1834" y="788">183</text><text x="1834" y="806">270</text><text x="1834" y="824">356</text><text x="1834" y="842">125</text><text x="1834" y="860">134</text><text x="1834" y="878">189</text><text x="1834" y="896">162</text><text x="1834" y="914">238</text><text x="1834" y="932">311</text><text x="1834" y="950">183</text><text x="1834" y="968" fill="#c000c0">5663</text></g>
<g class="m c" fill="#00e000"><text x="1856" y="482">S</text><text x="1856" y="500">S</text><text x="1856" y="590">S</text><text x="1856" y="680">S</text><text x="1856" y="716">S</text><text x="1856" y="752">S</text><text x="1856" y="788">S</text><text x="1856" y="806">S</text><text x="1856" y="860">S</text><text x="1856" y="896">S</text><text x="1856" y="914">S</text><text x="1856" y="932">S</text></g>
<g class="m c" fill="#ff3030"><text x="1856" y="518">B</text><text x="1856" y="536">B</text><text x="1856" y="554">B</text><text x="1856" y="572">B</text><text x="1856" y="608">B</text><text x="1856" y="626">B</text><text x="1856" y="644">B</text><text x="1856" y="662">B</text><text x="1856" y="698">B</text><text x="1856" y="734">B</text><text x="1856" y="770">B</text><text x="1856" y="824">B</text><text x="1856" y="842">B</text><text x="1856" y="878">B</text><text x="1856" y="950">B</text></g>
<g class="m e" fill="#848484"><text x="1892" y="482">46</text><text x="1892" y="500">31</text><text x="1892" y="518">59</text><text x="1892" y="536">67</text><text x="1892" y="554">36</text><text x="1892" y="572">31</text><text x="1892" y="590">125</text><text x="1892" y="608">196</text><text x="1892" y="626">69</text><text x="1892" y="644">96</text><text x="1892" y="662">101</text><text x="1892" y="680">75</text><text x="1892" y="698">63</text><text x="1892" y="716">75</text><text x="1892" y="734">42</text><text x="1892" y="752">78</text><text x="1892" y="770">66</text><text x="1892" y="788">65</text><text x="1892" y="806">47</text><text x="1892" y="824">64</text><text x="1892" y="842">27</text><text x="1892" y="860">34</text><text x="1892" y="878">34</text><text x="1892" y="896">35</text><text x="1892" y="914">82</text><text x="1892" y="932">54</text><text x="1892" y="950">70</text><text x="1892" y="968">1273</text></g>

<!-- sidebar -->
<rect x="1895" y="30" width="25" height="998" fill="#f3f3f3"/>
<g fill="none" stroke="#2a66c8" stroke-width="1.300">
<path d="M1900 42l8-7v4h8v6h-8v4z"/>
<path d="M1908 55l7 8h-4v8h-6v-8h-4z"/>
<path d="M1905 80h6v8h4l-7 8-7-8h4z"/>
<rect x="1900" y="103" width="15" height="15" fill="#fff"/>
<rect x="1900" y="126" width="15" height="15" fill="#fff"/>
<rect x="1900" y="149" width="15" height="15" fill="#fff"/>
<rect x="1900" y="172" width="15" height="15" fill="#fff"/>
<rect x="1903" y="196" width="12" height="9" fill="#fff"/><rect x="1900" y="200" width="15" height="11" fill="#fff"/>
<rect x="1900" y="220" width="15" height="15" fill="#fff"/>
<rect x="1900" y="242" width="15" height="15" fill="#fff"/>
<rect x="1900" y="265" width="15" height="15" fill="#fff"/>
<rect x="1900" y="289" width="15" height="15" fill="#fff"/>
<rect x="1900" y="334" width="15" height="15" fill="#fff"/>
<rect x="1900" y="365" width="15" height="14" fill="#fff"/>
<rect x="1900" y="489" width="15" height="14" fill="#fff"/>
<rect x="1900" y="511" width="15" height="14" fill="#fff"/>
</g>
<path d="M1902 106h3v9h-3zM1906 106h3v6h-3zM1910 106h3v9h-3z" fill="#d04040"/>
<path d="M1902 129h2v2h-2zM1906 129h2v2h-2zM1910 129h2v2h-2zM1902 133h2v2h-2zM1906 133h2v2h-2zM1910 133h2v2h-2zM1902 137h2v2h-2zM1906 137h2v2h-2zM1910 137h2v2h-2z" fill="#1a3aa0"/>
<path d="M1902 161l4-4 3 2 5-7" fill="none" stroke="#d02020"/>
<path d="M1903 175h3v9h-3zM1909 175h3v7h-3z" fill="#d02020"/><path d="M1906 178h3v8h-3z" fill="#20a030"/>
<path d="M1902 203h10M1902 206h10M1902 209h10" stroke="#1a3aa0"/>
<g font-size="11" fill="#1a50b0" class="c">
<text x="1907" y="227" font-family="Liberation Sans">F10</text>
<text x="1907" y="296">F12</text>
<text x="1907" y="319" font-style="italic" fill="#0a6a70">f(x)</text>
<text x="1908" y="395" font-size="10" font-weight="700" fill="#3858c8">RSI</text>
<text x="1907" y="496">F5</text>
<text x="1907" y="541" font-size="12">1</text><text x="1907" y="564" font-size="12">5</text><text x="1907" y="587" font-size="12">15</text><text x="1907" y="610" font-size="12">30</text><text x="1907" y="633" font-size="12">60</text>
<text x="1908" y="656" font-size="13">日</text><text x="1908" y="679" font-size="13">周</text><text x="1908" y="702" font-size="13">月</text><text x="1907" y="725" font-size="12">N</text><text x="1908" y="748" font-size="13">多</text><text x="1908" y="771" font-size="13">季</text><text x="1908" y="794" font-size="13">年</text>
</g>
<path d="M1902 249h4v-5h8M1902 254h4M1908 244h6v4h-6zM1908 251h6v4h-6z" fill="none" stroke="#e09020"/>
<path d="M1903 268h8v9h-8zM1903 271h8M1903 274h8" fill="#f08030" stroke="#e06010"/>
<circle cx="1907" cy="341" r="5" fill="none" stroke="#1a60c0" stroke-width="1.500"/>
<path d="M1901 369l3-2 2 2 3-2 3 2 2-2M1901 374l3-2 2 2 3-2 3 2 2-2" fill="none" stroke="#d03030"/>
<rect x="1896" y="356.500" width="23" height="1.200" fill="#a8a8a8"/><rect x="1896" y="479" width="23" height="1.200" fill="#a8a8a8"/>
<text x="1908" y="418" font-size="17" font-weight="700" fill="#c02030" text-anchor="middle">S</text>
<path d="M1907 434l3 4h-2v3h3v-2l4 3-4 3v-2h-3v3h2l-3 4-3-4h2v-3h-3v2l-4-3 4-3v2h3v-3h-2z" fill="#1050d0"/>
<path d="M1902 471l2-5 9-9 3 3-9 9z" fill="#e8b040" stroke="#a86820" stroke-width=".8"/>
<path d="M1903 515a5 4 0 0 1 9-1M1912 521a5 4 0 0 1-9 1" fill="none" stroke="#30a040" stroke-width="2"/>
<rect x="1896.500" y="645.500" width="23" height="22" fill="none" stroke="#b8b8b8"/>

<!-- news bar -->
<rect y="1005" width="1895" height="23" fill="#2a3038"/>
<g font-size="12" fill="#dcdcdc">
<text x="0" y="1017">通境外4588城</text>
<text x="107" y="1017" textLength="319" lengthAdjust="spacingAndGlyphs">诺禾致源携手华大智造深度合作,正式开启T7+科研测序服务</text>
<text x="465" y="1017" textLength="372" lengthAdjust="spacingAndGlyphs">海南省属企业首家突破!海控能源冲刺四季度发力绿证销售,30万张成</text>
<text x="1075" y="1017" textLength="319" lengthAdjust="spacingAndGlyphs">*北方稀土与包钢股份上调稀土价格,环比涨幅创两年来新高</text>
<text x="1433" y="1017" textLength="366" lengthAdjust="spacingAndGlyphs">帝国商业银行:金价上涨源于对长期通胀的担忧 黄金将在明后两年涨</text>
<text x="1846" y="1017" textLength="48" lengthAdjust="spacingAndGlyphs">提前10天</text>
</g>

<!-- status bar -->
<rect y="1028" width="1920" height="22" fill="#1d232b"/>
<circle cx="12" cy="1040" r="6" fill="#6a7078"/><path d="M9 1039l3 3 3-3" stroke="#222" fill="none"/>
<g font-size="13.500">
<g fill="#f0f0f0"><text x="24" y="1040">上证</text><text x="241" y="1040" textLength="53" lengthAdjust="spacingAndGlyphs">11321亿</text><text x="300" y="1040">深证</text><text x="516" y="1040" textLength="53" lengthAdjust="spacingAndGlyphs">13835亿</text><text x="574" y="1040">创业</text><text x="790" y="1040" textLength="46" lengthAdjust="spacingAndGlyphs">6209亿</text><text x="852" y="1040" textLength="43" lengthAdjust="spacingAndGlyphs">总成交</text><text x="903" y="1040" textLength="52" lengthAdjust="spacingAndGlyphs">25345亿</text></g>
<g fill="#2fc464"><text x="61" y="1040" textLength="49" lengthAdjust="spacingAndGlyphs">3897.03</text><text x="130" y="1040" textLength="40" lengthAdjust="spacingAndGlyphs">-36.94</text><text x="184" y="1040" textLength="44" lengthAdjust="spacingAndGlyphs">-0.94%</text><text x="335" y="1040" textLength="58" lengthAdjust="spacingAndGlyphs">13355.42</text><text x="399" y="1040" textLength="49" lengthAdjust="spacingAndGlyphs">-370.14</text><text x="457" y="1040" textLength="45" lengthAdjust="spacingAndGlyphs">-2.70%</text><text x="610" y="1040" textLength="51" lengthAdjust="spacingAndGlyphs">3113.26</text><text x="674" y="1040" textLength="49" lengthAdjust="spacingAndGlyphs">-148.56</text><text x="733" y="1040" textLength="45" lengthAdjust="spacingAndGlyphs">-4.55%</text></g>
<text x="1002" y="1040" fill="#e8e8e8" textLength="36" lengthAdjust="spacingAndGlyphs">已连接</text>
<text x="1845" y="1040" fill="#e8e8e8" font-size="12.500" textLength="47" lengthAdjust="spacingAndGlyphs">00:58:26</text>
</g>
<circle cx="971" cy="1040" r="6" fill="none" stroke="#8a9098" stroke-width="1.500"/><path d="M969 1044l4-8" stroke="#8a9098"/>
<rect x="985" y="1033" width="12" height="14" rx="2" fill="#4a5058"/><text x="988" y="1040" font-size="11" fill="#ddd">2</text>
<g fill="#8a9098"><rect x="1726" y="1033" width="14" height="14" rx="2"/><rect x="1762" y="1032" width="7" height="16" rx="2"/><rect x="1758" y="1036" width="3" height="8"/><circle cx="1793" cy="1040" r="6" fill="none" stroke="#8a9098"/></g>
<path d="M1729 1037h2v2h-2zM1735 1037h2v2h-2zM1729 1043h8v1h-8z" fill="#1d232b"/>
<path d="M1818 1032h2v3h2v-3h2v3h2v-3h2v5h-1l1 10h-10l1-10h-1z" fill="#e8e8e8"/>
</svg>
</body></html>
